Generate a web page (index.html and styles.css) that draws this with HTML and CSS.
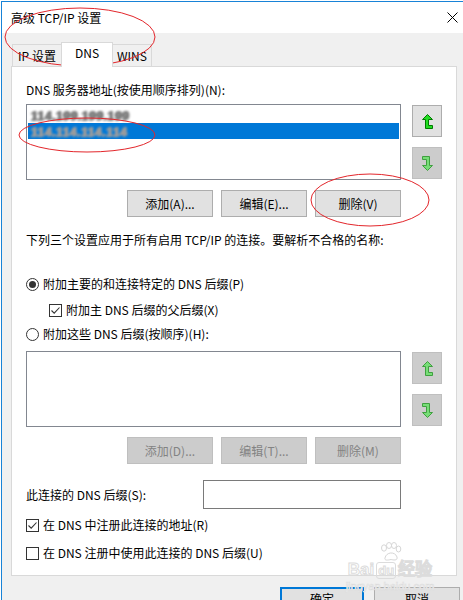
FILE: index.html
```html
<!DOCTYPE html>
<html lang="zh-CN">
<head>
  <meta charset="UTF-8" />
  <meta name="viewport" content="width=device-width, initial-scale=1.0"/>
  <title>高级 TCP/IP 设置</title>
  <link rel="stylesheet" href="styles.css">
</head>
<body>
  <div class="window">
    <div class="titlebar">
      <span class="title">高级 TCP/IP 设置</span>
      <svg class="close" width="11" height="11" viewBox="0 0 11 11"><path d="M0.5 0.5 L10.5 10.5 M10.5 0.5 L0.5 10.5" stroke="#000" stroke-width="1" fill="none"/></svg>
    </div>

    <div class="tabs">
      <div class="tab tab-ip">IP 设置</div>
      <div class="tab tab-dns active">DNS</div>
      <div class="tab tab-wins">WINS</div>
    </div>

    <div class="panel">
      <div class="label first">DNS 服务器地址(按使用顺序排列)(N):</div>

      <div class="list-row">
        <div class="listbox">
          <div class="item"><span class="blur">114.199.199.199</span></div>
          <div class="item selected"><span class="blur">114.114.114.114</span></div>
        </div>
        <div class="side">
          <div class="sbtn">
            <svg width="11" height="15" viewBox="0 0 11 15"><polygon points="5.5,0.5 10.5,5.5 6.5,5.5 6.5,11.5 10.5,11.5 10.5,14.5 3.5,14.5 3.5,5.5 0.5,5.5" fill="#22dd22" stroke="#007a00"/></svg>
          </div>
          <div class="sbtn disabled">
            <svg width="11" height="15" viewBox="0 0 11 15"><polygon points="5.5,14.5 0.5,9.5 4.5,9.5 4.5,3.5 0.5,3.5 0.5,0.5 7.5,0.5 7.5,9.5 10.5,9.5" fill="#77dd77" stroke="#3fa03f"/></svg>
          </div>
        </div>
      </div>

      <div class="btn-row">
        <div class="btn">添加(A)...</div>
        <div class="btn">编辑(E)...</div>
        <div class="btn">删除(V)</div>
      </div>

      <div class="label desc">下列三个设置应用于所有启用 TCP/IP 的连接。要解析不合格的名称:</div>

      <div class="opt radio-one">
        <span class="radio on"></span>
        <span>附加主要的和连接特定的 DNS 后缀(P)</span>
      </div>
      <div class="opt sub">
        <span class="check">
          <svg width="11" height="11" viewBox="0 0 11 11"><path d="M1.5 5.5 L4.2 8.2 L9.5 2.5" stroke="#333" stroke-width="1.1" fill="none"/></svg>
        </span>
        <span>附加主 DNS 后缀的父后缀(X)</span>
      </div>
      <div class="opt radio-two">
        <span class="radio"></span>
        <span>附加这些 DNS 后缀(按顺序)(H):</span>
      </div>

      <div class="list-row second">
        <div class="listbox"></div>
        <div class="side">
          <div class="sbtn disabled">
            <svg width="11" height="15" viewBox="0 0 11 15"><polygon points="5.5,0.5 10.5,5.5 6.5,5.5 6.5,11.5 10.5,11.5 10.5,14.5 3.5,14.5 3.5,5.5 0.5,5.5" fill="#77dd77" stroke="#3fa03f"/></svg>
          </div>
          <div class="sbtn disabled">
            <svg width="11" height="15" viewBox="0 0 11 15"><polygon points="5.5,14.5 0.5,9.5 4.5,9.5 4.5,3.5 0.5,3.5 0.5,0.5 7.5,0.5 7.5,9.5 10.5,9.5" fill="#77dd77" stroke="#3fa03f"/></svg>
          </div>
        </div>
      </div>

      <div class="btn-row">
        <div class="btn disabled">添加(D)...</div>
        <div class="btn disabled">编辑(T)...</div>
        <div class="btn disabled">删除(M)</div>
      </div>

      <div class="suffix-row">
        <span>此连接的 DNS 后缀(S):</span>
        <div class="textbox"></div>
      </div>

      <div class="opt reg">
        <span class="check">
          <svg width="11" height="11" viewBox="0 0 11 11"><path d="M1.5 5.5 L4.2 8.2 L9.5 2.5" stroke="#333" stroke-width="1.1" fill="none"/></svg>
        </span>
        <span>在 DNS 中注册此连接的地址(R)</span>
      </div>
      <div class="opt use">
        <span class="check"></span>
        <span>在 DNS 注册中使用此连接的 DNS 后缀(U)</span>
      </div>
    </div>

    <div class="footer">
      <div class="btn ok">确定</div>
      <div class="btn cancel">取消</div>
    </div>
  </div>

  <!-- red marks drawn over the screenshot -->
  <svg class="marks" width="463" height="600" viewBox="0 0 463 600">
    <ellipse cx="80" cy="37" rx="75" ry="29" fill="none" stroke="#e3262b" stroke-width="1"/>
    <ellipse cx="87" cy="135" rx="68" ry="17" fill="none" stroke="#e3262b" stroke-width="1"/>
    <ellipse cx="370" cy="200" rx="59" ry="26" fill="none" stroke="#e3262b" stroke-width="1"/>
  </svg>

  <div class="watermark">
    <svg class="paw" width="24" height="20" viewBox="0 0 24 20">
      <g fill="none" stroke="#d6d6d6" stroke-width="1">
        <ellipse cx="6" cy="6" rx="2.5" ry="3.2"/>
        <ellipse cx="11" cy="3.5" rx="2.5" ry="3"/>
        <ellipse cx="16" cy="3.5" rx="2.5" ry="3"/>
        <ellipse cx="20.5" cy="7" rx="2.3" ry="3"/>
        <path d="M7 16 C8 10 17 9 19 15 C20 19 15 18 13 17.5 C11 18 6 19 7 16 Z"/>
      </g>
    </svg>
    <div class="wm-logo">Bai<span class="du">du</span>经验</div>
    <div class="wm-url">jingyan.baidu.com</div>
  </div>
</body>
</html>
```

FILE: styles.css
```css
* {
  box-sizing: border-box;
}

body {
  margin: 0;
  width: 463px;
  height: 600px;
  overflow: hidden;
  position: relative;
  background: #fff;
  font-family: "Noto Sans CJK SC", "Microsoft YaHei", sans-serif;
  font-size: 12px;
  color: #000;
}

.window {
  margin: 1px 0 0 1px;
  height: 599px;
  border-left: 1px solid #1883d7;
  border-top: 1px solid #1883d7;
  background: #f0f0f0;
}

.titlebar {
  height: 31px;
  background: #fff;
  display: flex;
  align-items: center;
  padding: 0 5px 0 9px;
}

.title {
  flex: 1;
}

/* tabs */
.tabs {
  height: 33px;
  display: flex;
  align-items: flex-end;
  padding-left: 10px;
}

.tab {
  height: 22px;
  border: 1px solid #d9d9d9;
  border-bottom: none;
  background: #f0f0f0;
  text-align: center;
  line-height: 16px;
  padding-top: 3px;
}

.tab-ip {
  width: 50px;
}

.tab-dns {
  width: 52px;
  margin-left: -1px;
}

.tab-wins {
  width: 40px;
  margin-left: -1px;
}

.tab.active {
  height: 25px;
  margin-bottom: -1px;
  padding-top: 2px;
  background: #fff;
  position: relative;
  z-index: 1;
}

/* main panel */
.panel {
  margin-left: 9px;
  width: 446px;
  height: 510px;
  border: 1px solid #d9d9d9;
  background: #fff;
  padding-left: 14px;
}

.label {
  line-height: 16px;
}

.label.first {
  margin-top: 15px;
}

.label.desc {
  margin-top: 15px;
}

.list-row {
  display: flex;
  margin-top: 6px;
}

.list-row.second {
  margin-top: 9px;
}

.listbox {
  width: 375px;
  height: 76px;
  border: 1px solid #828790;
  padding: 2px 1px;
}

.item {
  height: 16px;
  line-height: 16px;
  padding-left: 3px;
}

.item.selected {
  background: #0078d7;
}

.blur {
  font-family: "Liberation Sans", Arial, sans-serif;
  font-size: 12px;
  font-weight: bold;
  color: #7a7a7a;
  letter-spacing: 0.6px;
  text-shadow: 1px 0 0 #8a8a8a, -1px 1px 0 #8a8a8a;
  filter: blur(1.1px);
}

.item.selected .blur {
  color: #9a9a9a;
  text-shadow: 1px 0 0 #a0a0a0, -1px 1px 0 #a0a0a0;
}

.side {
  margin-left: 11px;
  padding-top: 1px;
  display: flex;
  flex-direction: column;
  gap: 10px;
}

.sbtn {
  width: 30px;
  height: 32px;
  background: #e1e1e1;
  border: 1px solid #adadad;
  display: flex;
  align-items: center;
  justify-content: center;
}

.sbtn.disabled {
  background: #cccccc;
  border-color: #bfbfbf;
}

/* push buttons */
.btn-row {
  width: 375px;
  margin-top: 10px;
  display: flex;
  justify-content: flex-end;
  gap: 8px;
}

.btn {
  width: 86px;
  height: 27px;
  background: #e1e1e1;
  border: 1px solid #adadad;
  display: flex;
  align-items: center;
  justify-content: center;
}

.btn.disabled {
  background: #cccccc;
  border-color: #bfbfbf;
  color: #838383;
}

/* radios and checkboxes */
.opt {
  height: 16px;
  display: flex;
  align-items: center;
  gap: 4px;
  line-height: 16px;
}

.radio-one {
  margin-top: 28px;
}

.sub {
  margin-top: 10px;
  padding-left: 23px;
}

.radio-two {
  margin-top: 8px;
}

.reg {
  margin-top: 8px;
}

.use {
  margin-top: 12px;
}

.radio {
  width: 13px;
  height: 13px;
  border: 1px solid #333;
  border-radius: 50%;
  display: flex;
  align-items: center;
  justify-content: center;
}

.radio.on::after {
  content: "";
  width: 7px;
  height: 7px;
  border-radius: 50%;
  background: #333;
}

.check {
  width: 13px;
  height: 13px;
  border: 1px solid #333;
  display: flex;
  align-items: center;
  justify-content: center;
}

.suffix-row {
  width: 375px;
  margin-top: 16px;
  display: flex;
  align-items: center;
  justify-content: space-between;
}

.textbox {
  width: 198px;
  height: 29px;
  border: 1px solid #7a7a7a;
}

/* dialog buttons */
.footer {
  margin-top: 11px;
  display: flex;
  justify-content: flex-end;
  gap: 10px;
  padding-right: 3px;
}

.footer .btn {
  height: 23px;
}

.btn.ok {
  width: 84px;
  border: 2px solid #0078d7;
}

.btn.cancel {
  width: 86px;
}

/* overlays */
.marks {
  position: absolute;
  top: 0;
  left: 0;
  pointer-events: none;
}

.watermark {
  position: absolute;
  left: 344px;
  top: 542px;
  width: 92px;
  text-align: center;
  pointer-events: none;
}

.paw {
  display: block;
  margin: 0 auto 0 34px;
}

.wm-logo {
  font-family: "Liberation Sans", Arial, sans-serif;
  font-weight: bold;
  font-size: 17px;
  line-height: 16px;
  color: #fff;
  -webkit-text-stroke: 1px #dcdcdc;
  white-space: nowrap;
}

.wm-logo .du {
  font-size: 13px;
  margin: 0 2px;
  padding: 0 1px;
  border: 1px solid #dcdcdc;
  border-radius: 3px;
}

.wm-url {
  font-family: "Liberation Sans", Arial, sans-serif;
  font-size: 11px;
  line-height: 14px;
  color: #fff;
  -webkit-text-stroke: 0.6px #dcdcdc;
  white-space: nowrap;
}
```
